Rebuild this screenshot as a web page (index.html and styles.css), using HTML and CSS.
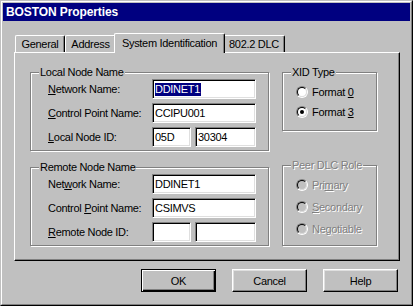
FILE: index.html
```html
<!DOCTYPE html>
<html lang="en">
<head>
    <meta charset="UTF-8">
    <title>BOSTON Properties</title>
    <link rel="stylesheet" href="styles.css">
</head>
<body>

    <div class="window">
        <div class="frame">
            <div class="titlebar">BOSTON Properties</div>

            <div class="client">
                <div class="tabs">
                    <div class="tab tab-general">General</div>
                    <div class="tab tab-address">Address</div>
                    <div class="tab tab-system active">System Identification</div>
                    <div class="tab tab-dlc">802.2 DLC</div>
                </div>

                <div class="panel">
                    <div class="group node-group">
                        <span class="group-title">Local Node Name</span>
                        <div class="field">
                            <label><u>N</u>etwork Name:</label>
                            <div class="edit"><span class="selected">DDINET1</span></div>
                        </div>
                        <div class="field">
                            <label><u>C</u>ontrol Point Name:</label>
                            <div class="edit">CCIPU001</div>
                        </div>
                        <div class="field">
                            <label><u>L</u>ocal Node ID:</label>
                            <div class="edit edit-short">05D</div>
                            <div class="edit edit-long">30304</div>
                        </div>
                    </div>

                    <div class="group radio-group xid-group">
                        <span class="group-title">XID Type</span>
                        <div class="radio-row">
                            <span class="radio"></span>
                            <span>Format <u>0</u></span>
                        </div>
                        <div class="radio-row">
                            <span class="radio checked"></span>
                            <span>Format <u>3</u></span>
                        </div>
                    </div>

                    <div class="group node-group">
                        <span class="group-title">Remote Node Name</span>
                        <div class="field">
                            <label>Net<u>w</u>ork Name:</label>
                            <div class="edit">DDINET1</div>
                        </div>
                        <div class="field">
                            <label>Control <u>P</u>oint Name:</label>
                            <div class="edit">CSIMVS</div>
                        </div>
                        <div class="field">
                            <label><u>R</u>emote Node ID:</label>
                            <div class="edit edit-short"></div>
                            <div class="edit edit-long"></div>
                        </div>
                    </div>

                    <div class="group radio-group peer-group disabled">
                        <span class="group-title">Peer DLC Role</span>
                        <div class="radio-row">
                            <span class="radio"></span>
                            <span>Pri<u>m</u>ary</span>
                        </div>
                        <div class="radio-row">
                            <span class="radio"></span>
                            <span><u>S</u>econdary</span>
                        </div>
                        <div class="radio-row">
                            <span class="radio"></span>
                            <span>Ne<u>g</u>otiable</span>
                        </div>
                    </div>
                </div>

                <div class="buttons">
                    <button class="default">OK</button>
                    <button>Cancel</button>
                    <button>Help</button>
                </div>
            </div>
        </div>
    </div>

</body>
</html>
```

FILE: styles.css
```css
* {
    box-sizing: border-box;
    margin: 0;
    padding: 0;
}

body {
    font-family: 'Liberation Sans', Arial, sans-serif;
    font-size: 11px;
    letter-spacing: -0.3px;
    color: #000;
    background: #c0c0c0;
}

u {
    text-decoration: underline;
    text-underline-offset: 1px;
}

/* window frame */
.window {
    width: 413px;
    height: 306px;
    background: #c0c0c0;
    border: 1px solid;
    border-color: #c0c0c0 #000 #000 #c0c0c0;
}

.frame {
    height: 100%;
    border: 1px solid;
    border-color: #fff #808080 #808080 #fff;
    padding: 1px;
}

.titlebar {
    height: 18px;
    background: #000080;
    color: #fff;
    font-weight: bold;
    font-size: 12px;
    letter-spacing: -0.1px;
    line-height: 18px;
    padding-left: 3px;
}

.client {
    padding: 12px 10px 0 11px;
}

/* tabs */
.tabs {
    display: flex;
    align-items: flex-end;
    height: 19px;
    padding-left: 1px;
}

.tab {
    height: 17px;
    padding-top: 2px;
    line-height: 13px;
    text-align: center;
    background: #c0c0c0;
    border-top: 1px solid #fff;
    border-left: 1px solid #fff;
    border-right: 1px solid #000;
    border-radius: 2px 2px 0 0;
    box-shadow: inset -1px 0 #808080;
}

.tab-general { width: 50px; }
.tab-address { width: 51px; }
.tab-system { width: 107px; }
.tab-dlc { width: 62px; }

.tab.active {
    position: relative;
    z-index: 1;
    height: 20px;
    width: 111px;
    margin: 0 -2px -1px;
    padding-top: 3px;
}

.panel {
    position: relative;
    height: 209px;
    border: 1px solid;
    border-color: #fff #000 #000 #fff;
    box-shadow: inset -1px -1px #808080;
    padding: 19px 0 0 15px;
    display: grid;
    grid-template-columns: 239px 95px;
    grid-template-rows: 79px 79px;
    column-gap: 13px;
    row-gap: 16px;
    align-content: start;
    align-items: start;
}

/* group boxes */
.group {
    position: relative;
    border: 1px solid #808080;
    box-shadow: inset 1px 1px #fff, 1px 1px #fff;
}

.group-title {
    position: absolute;
    top: -7px;
    left: 8px;
    padding: 0 1px;
    line-height: 13px;
    background: #c0c0c0;
}

.node-group {
    height: 79px;
    padding: 6px 0 0 17px;
    display: flex;
    flex-direction: column;
    gap: 4px;
}

.field {
    display: flex;
    align-items: center;
    height: 20px;
}

.field label {
    width: 104px;
}

.edit {
    width: 104px;
    height: 20px;
    background: #fff;
    border: 1px solid;
    border-color: #808080 #fff #fff #808080;
    box-shadow: inset 1px 1px #000, inset -1px -1px #dfdfdf;
    padding: 1px 0 0 2px;
    line-height: 16px;
    white-space: nowrap;
}

.edit-short {
    width: 39px;
}

.edit-long {
    width: 61px;
    margin-left: 4px;
}

.selected {
    display: inline-block;
    background: #000080;
    color: #fff;
    line-height: 13px;
    padding-right: 1px;
}

/* radio groups */
.radio-group {
    padding-left: 13px;
}

.xid-group {
    height: 59px;
    padding-top: 9px;
}

.peer-group {
    height: 81px;
    margin-top: -2px;
    padding-top: 8px;
}

.radio-row {
    display: flex;
    align-items: center;
    gap: 4px;
    height: 20px;
}

.peer-group .radio-row {
    height: 22px;
}

.radio {
    position: relative;
    width: 12px;
    height: 12px;
    border-radius: 50%;
    border: 1px solid;
    border-color: #808080 #fff #fff #808080;
}

.radio::before {
    content: '';
    position: absolute;
    inset: 0;
    border-radius: 50%;
    border: 1px solid;
    border-color: #000 #dfdfdf #dfdfdf #000;
    background: #fff;
}

.radio.checked::after {
    content: '';
    position: absolute;
    left: 3px;
    top: 3px;
    width: 4px;
    height: 4px;
    border-radius: 50%;
    background: #000;
}

.disabled {
    color: #808080;
    text-shadow: 1px 1px #fff;
}

.disabled .radio::before {
    background: #c0c0c0;
}

/* buttons */
.buttons {
    display: flex;
    justify-content: flex-end;
    gap: 16px;
    margin-top: 8px;
    padding-right: 2px;
}

.buttons button {
    width: 75px;
    height: 23px;
    font-family: inherit;
    font-size: 11px;
    letter-spacing: inherit;
    color: #000;
    background: #c0c0c0;
    border: 1px solid;
    border-color: #fff #000 #000 #fff;
    box-shadow: inset -1px -1px #808080, inset 1px 1px #dfdfdf;
}

.buttons button.default {
    border-color: #000;
    box-shadow: inset 1px 1px #fff, inset -1px -1px #000, inset -2px -2px #808080;
}
```
